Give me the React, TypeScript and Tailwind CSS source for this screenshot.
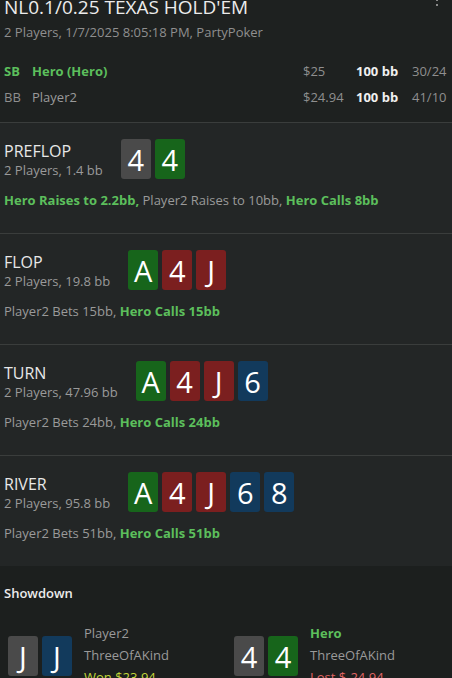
import React from "react";

type Card = { r: string; c: "gray" | "green" | "red" | "blue" };

const cardBg: Record<Card["c"], string> = {
  gray: "bg-[#4a4a4a]",
  green: "bg-[#17651b]",
  red: "bg-[#7b1f1f]",
  blue: "bg-[#123a5c]",
};

function PlayingCard({ card }: { card: Card }) {
  return (
    <div
      className={`${cardBg[card.c]} w-[30px] h-[40px] rounded-[3px] flex items-center justify-center text-white text-[29px] leading-none`}
    >
      {card.r}
    </div>
  );
}

type Act = { text: string; hero?: boolean };

const streets: { name: string; pot: string; cards: Card[]; acts: Act[] }[] = [
  {
    name: "PREFLOP",
    pot: "2 Players, 1.4 bb",
    cards: [
      { r: "4", c: "gray" },
      { r: "4", c: "green" },
    ],
    acts: [
      { text: "Hero Raises to 2.2bb,", hero: true },
      { text: "Player2 Raises to 10bb," },
      { text: "Hero Calls 8bb", hero: true },
    ],
  },
  {
    name: "FLOP",
    pot: "2 Players, 19.8 bb",
    cards: [
      { r: "A", c: "green" },
      { r: "4", c: "red" },
      { r: "J", c: "red" },
    ],
    acts: [{ text: "Player2 Bets 15bb," }, { text: "Hero Calls 15bb", hero: true }],
  },
  {
    name: "TURN",
    pot: "2 Players, 47.96 bb",
    cards: [
      { r: "A", c: "green" },
      { r: "4", c: "red" },
      { r: "J", c: "red" },
      { r: "6", c: "blue" },
    ],
    acts: [{ text: "Player2 Bets 24bb," }, { text: "Hero Calls 24bb", hero: true }],
  },
  {
    name: "RIVER",
    pot: "2 Players, 95.8 bb",
    cards: [
      { r: "A", c: "green" },
      { r: "4", c: "red" },
      { r: "J", c: "red" },
      { r: "6", c: "blue" },
      { r: "8", c: "blue" },
    ],
    acts: [{ text: "Player2 Bets 51bb," }, { text: "Hero Calls 51bb", hero: true }],
  },
];

function Street({ s }: { s: (typeof streets)[number] }) {
  return (
    <div className="bg-[#232626] border-t border-[#3a3d3c] px-1 pt-4 pb-[24px]">
      <div className="flex items-center gap-[18px]">
        <div className="flex flex-col pt-[2px]">
          <span className="text-[16px] leading-[20px] text-[#e8e8e8]">{s.name}</span>
          <span className="text-[13px] leading-[18px] text-[#9a9a9a]">{s.pot}</span>
        </div>
        <div className="flex gap-1">
          {s.cards.map((c, i) => (
            <PlayingCard key={i} card={c} />
          ))}
        </div>
      </div>
      <div className="mt-3 text-[13px] leading-[18px]">
        {s.acts.map((a, i) => (
          <span key={i} className={a.hero ? "font-bold text-[#5cbf5c]" : "text-[#9a9a9a]"}>
            {i > 0 ? " " : ""}
            {a.text}
          </span>
        ))}
      </div>
    </div>
  );
}

function ShowPlayer({
  cards,
  name,
  hero,
  result,
  won,
}: {
  cards: Card[];
  name: string;
  hero?: boolean;
  result: string;
  won?: boolean;
}) {
  return (
    <div className="flex items-start gap-3 pl-2">
      <div className="flex gap-1 mt-[14px]">
        {cards.map((c, i) => (
          <PlayingCard key={i} card={c} />
        ))}
      </div>
      <div className="flex flex-col text-[13px] leading-[22px]">
        <span className={hero ? "font-bold text-[#5cbf5c]" : "text-[#9a9a9a]"}>{name}</span>
        <span className="text-[#9a9a9a]">ThreeOfAKind</span>
        <span className={won ? "text-[#c2d63a]" : "text-[#e06464]"}>{result}</span>
      </div>
    </div>
  );
}

export default function App() {
  return (
    <div
      className="w-[452px] h-[678px] overflow-hidden bg-[#1c1f1e]"
      style={{ fontFamily: '"Segoe UI", "Open Sans", "Noto Sans", sans-serif' }}
    >
      <div className="bg-[#1e2120] px-1 pb-[12px]">
        <div className="flex items-start justify-between mt-[-5px]">
          <span className="text-[19px] leading-[24px] text-[#ececec]">NL0.1/0.25 TEXAS HOLD'EM</span>
          <span className="flex flex-col gap-[3px] pt-[4px] pr-[10px]">
            <span className="w-[2px] h-[2px] bg-[#8a8a8a]" />
            <span className="w-[2px] h-[2px] bg-[#8a8a8a]" />
          </span>
        </div>
        <div className="mt-[4px] text-[13px] leading-[18px] text-[#8f8f8f]">
          2 Players, 1/7/2025 8:05:18 PM, PartyPoker
        </div>
        <div className="mt-[17px] flex flex-col text-[13px] leading-[26px]">
          <div className="flex items-center">
            <span className="w-[28px] font-bold text-[#5cbf5c]">SB</span>
            <span className="flex-1 font-bold text-[#5cbf5c]">Hero (Hero)</span>
            <span className="w-[53px] text-[#8f8f8f]">$25</span>
            <span className="w-[56px] font-bold text-[#f0f0f0]">100 bb</span>
            <span className="w-[36px] text-[#8f8f8f]">30/24</span>
          </div>
          <div className="flex items-center">
            <span className="w-[28px] text-[#8f8f8f]">BB</span>
            <span className="flex-1 text-[#9a9a9a]">Player2</span>
            <span className="w-[53px] text-[#8f8f8f]">$24.94</span>
            <span className="w-[56px] font-bold text-[#f0f0f0]">100 bb</span>
            <span className="w-[36px] text-[#8f8f8f]">41/10</span>
          </div>
        </div>
      </div>
      {streets.map((s) => (
        <Street key={s.name} s={s} />
      ))}
      <div className="bg-[#1c1f1e] pt-[18px]">
        <div className="px-1 text-[13px] leading-[18px] font-semibold text-[#ececec]">Showdown</div>
        <div className="grid grid-cols-2 mt-[20px]">
          <ShowPlayer
            cards={[
              { r: "J", c: "gray" },
              { r: "J", c: "blue" },
            ]}
            name="Player2"
            result="Won $23.94"
            won
          />
          <ShowPlayer
            cards={[
              { r: "4", c: "gray" },
              { r: "4", c: "green" },
            ]}
            name="Hero"
            hero
            result="Lost $-24.94"
          />
        </div>
      </div>
    </div>
  );
}
